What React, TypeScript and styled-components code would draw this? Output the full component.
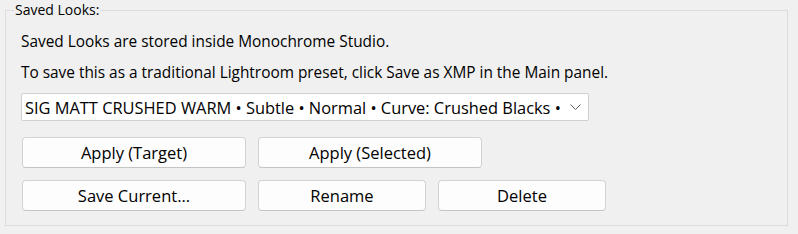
import React from "react";
import styled, { createGlobalStyle } from "styled-components";

const GlobalStyle = createGlobalStyle`
  html, body {
    margin: 0;
    padding: 0;
    background: #f0f0f0;
  }
  body {
    font-family: "Open Sans", "Noto Sans", "Liberation Sans", sans-serif;
    color: #000;
  }
`;

const Page = styled.div`
  width: 798px;
  height: 234px;
  padding: 2px 10px 0 5px;
  box-sizing: border-box;
`;

const Group = styled.fieldset`
  margin: 0;
  padding: 14px 15px 14px 15px;
  border: 1px solid #dcdcdc;
  border-radius: 0;
  display: flex;
  flex-direction: column;
  min-width: 0;
`;

const Legend = styled.legend`
  font-size: 14px;
  line-height: 16px;
  padding: 0 1px;
  margin-left: -7px;
  color: #000;
`;

const Note = styled.div`
  font-size: 15.4px;
  line-height: 20px;
  height: 20px;
  white-space: nowrap;
  & + & {
    margin-top: 11px;
  }
`;

const Combo = styled.div`
  margin-top: 10px;
  width: 568px;
  height: 28px;
  box-sizing: border-box;
  background: #fff;
  border: 1px solid #d0d0d0;
  border-radius: 2px;
  display: flex;
  align-items: center;
  padding: 0 7px 0 3px;
  gap: 8px;
`;

const ComboText = styled.span`
  flex: 1;
  font-size: 16.4px;
  white-space: nowrap;
  overflow: hidden;
`;

const ButtonRow = styled.div<{ $first?: boolean }>`
  display: flex;
  gap: 12px;
  margin-top: ${(p) => (p.$first ? "16px" : "12px")};
  padding-left: 1px;
`;

const Button = styled.button<{ $w: number }>`
  width: ${(p) => p.$w}px;
  height: 31px;
  box-sizing: border-box;
  background: #fdfdfd;
  border: 1px solid #d3d3d3;
  border-bottom-color: #c4c4c4;
  border-radius: 4px;
  font-family: inherit;
  font-size: 16.5px;
  color: #000;
  padding: 0;
`;

const Chevron = () => (
  <svg width="11" height="7" viewBox="0 0 11 7">
    <polyline points="0.5,0.5 5.5,5.5 10.5,0.5" fill="none" stroke="#606060" strokeWidth="1" />
  </svg>
);

export default function App() {
  return (
    <>
      <GlobalStyle />
      <Page>
        <Group>
          <Legend>Saved Looks:</Legend>
          <Note>Saved Looks are stored inside Monochrome Studio.</Note>
          <Note>To save this as a traditional Lightroom preset, click Save as XMP in the Main panel.</Note>
          <Combo>
            <ComboText>
              SIG MATT CRUSHED WARM • Subtle • Normal • Curve: Crushed Blacks • Tone: Warm
            </ComboText>
            <Chevron />
          </Combo>
          <ButtonRow $first>
            <Button $w={224}>Apply (Target)</Button>
            <Button $w={224}>Apply (Selected)</Button>
          </ButtonRow>
          <ButtonRow>
            <Button $w={224}>Save Current...</Button>
            <Button $w={168}>Rename</Button>
            <Button $w={168}>Delete</Button>
          </ButtonRow>
        </Group>
      </Page>
    </>
  );
}
